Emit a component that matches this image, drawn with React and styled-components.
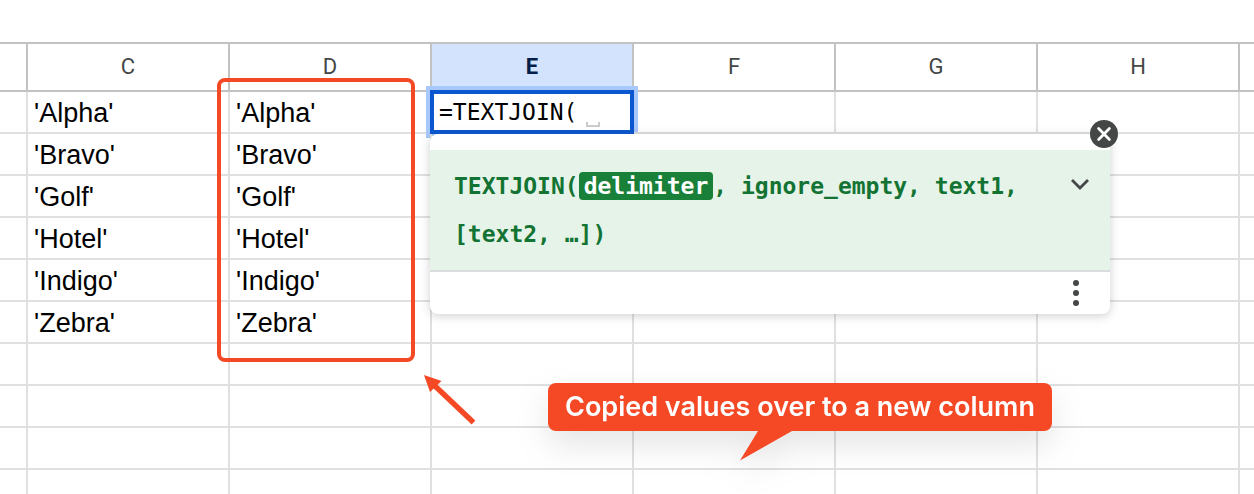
import { useState } from 'react';
import styled, { createGlobalStyle } from 'styled-components';

const GlobalStyle = createGlobalStyle`
  :root {
    --color-ink: #444746;
    --color-grid: #e0e0e0;
    --color-grid-dark: #c0c3c2;
    --color-note: #f54825;
    --color-blue: #0b57d0;
    --color-green: #137333;
    --font-cell: 'Liberation Sans', Arial, sans-serif;
    --font-code: 'DejaVu Sans Mono', monospace;
  }

  * {
    box-sizing: border-box;
  }

  body {
    margin: 0;
    background-color: #fff;
    font-family: var(--font-cell);
  }
`;

const Page = styled.main`
  position: relative;
  height: 100vh;
  padding-top: 42px;
  overflow: hidden;
`;

const Sheet = styled.table`
  width: 100%;
  table-layout: fixed;
  border-collapse: separate;
  border-spacing: 0;

  tr > :last-child {
    border-right: none;
  }
`;

const Col = styled.col`
  width: ${props => props.$width};
`;

const HeadCell = styled.th`
  height: 50px;
  padding: 0;
  border: 2px solid var(--color-grid-dark);
  border-left: none;
  background-color: ${props => (props.$active ? '#d3e3fd' : '#fff')};
  color: ${props => (props.$active ? '#041e49' : 'var(--color-ink)')};
  font-family: Roboto, sans-serif;
  font-size: 22px;
  font-weight: ${props => (props.$active ? 700 : 400)};
  line-height: 46px;
`;

const Cell = styled.td`
  position: relative;
  height: 42px;
  padding: 2px 6px 0;
  border-right: 2px solid var(--color-grid);
  border-bottom: 2px solid var(--color-grid);
  color: #000;
  font-size: 27px;
  line-height: 38px;
  white-space: nowrap;
`;

const Editor = styled.div`
  position: absolute;
  inset: -2px;
  display: flex;
  align-items: center;
  padding-left: 5px;
  border: 4px solid var(--color-blue);
  background-color: #fff;
  box-shadow: 0 0 0 4px #a8c7fa;
`;

const Formula = styled.input`
  width: 144px;
  height: 36px;
  padding: 0;
  border: none;
  outline: none;
  background: none;
  color: #000;
  font-family: var(--font-code);
  font-size: 23px;
`;

const SpaceMark = styled.span`
  width: 14px;
  height: 5px;
  margin-top: 24px;
  margin-left: 3px;
  border: 2px solid #ccc;
  border-top: none;
`;

const Hint = styled.section`
  position: absolute;
  top: 42px;
  left: -2px;
  z-index: 1;
  width: 680px;
  padding-top: 16px;
  border-radius: 8px;
  background-color: #fff;
  box-shadow: 0 2px 10px rgba(60, 64, 67, 0.25);
`;

const HintBody = styled.div`
  display: flex;
  align-items: flex-start;
  padding: 12px 14px 12px 24px;
  border-bottom: 2px solid #dadce0;
  background-color: #e6f3e9;
`;

const Signature = styled.code`
  flex: 1;
  color: var(--color-green);
  font-family: var(--font-code);
  font-size: 23px;
  font-weight: 700;
  line-height: 48px;
  white-space: normal;
`;

const Param = styled.span`
  ${props =>
    props.$active &&
    `
    padding: 1px 5px;
    border-radius: 4px;
    background-color: #188038;
    color: #fff;
  `}
`;

const HintFooter = styled.footer`
  display: flex;
  justify-content: flex-end;
  padding: 0 18px;
`;

const IconButton = styled.button`
  display: flex;
  align-items: center;
  justify-content: center;
  width: 32px;
  height: ${props => props.$height || '42px'};
  padding: 0;
  border: none;
  background: none;
  color: var(--color-ink);
  cursor: pointer;
`;

const CloseButton = styled(IconButton)`
  position: absolute;
  top: -14px;
  right: -8px;
  width: 28px;
  height: 28px;
  border-radius: 50%;
  background-color: var(--color-ink);
  color: #fff;
`;

const Outline = styled.div`
  position: absolute;
  top: 78px;
  left: 217px;
  width: 198px;
  height: 284px;
  border: 4px solid var(--color-note);
  border-radius: 8px;
  pointer-events: none;
`;

const Arrow = styled.svg`
  position: absolute;
  top: 374px;
  left: 422px;
  color: var(--color-note);
`;

const Callout = styled.aside`
  position: absolute;
  top: 383px;
  left: 548px;
  filter: drop-shadow(0 14px 16px rgba(0, 0, 0, 0.1));
`;

const CalloutText = styled.p`
  margin: 0;
  padding: 0 17px;
  border-radius: 8px;
  background-color: var(--color-note);
  color: #fff;
  font-family: Inter, sans-serif;
  font-size: 27px;
  font-weight: 600;
  line-height: 48px;
  white-space: nowrap;
`;

const CalloutTail = styled.svg`
  display: block;
  margin-left: 192px;
  color: var(--color-note);
`;

const columns = ['C', 'D', 'E', 'F', 'G', 'H'];
const values = ['Alpha', 'Bravo', 'Golf', 'Hotel', 'Indigo', 'Zebra'];
const rows = Array.from({ length: 10 }, (_, i) => values[i]);

const FormulaHint = () => (
  <Hint aria-label='Formula help'>
    <HintBody>
      <Signature>
        <span>TEXTJOIN(</span>
        <Param $active>delimiter</Param>
        <span>, </span>
        <Param>ignore_empty, </Param>
        <Param>text1, </Param>
        <Param>[text2, …])</Param>
      </Signature>
      <IconButton $height='44px' aria-label='Expand'>
        <svg width='20' height='14' viewBox='0 0 20 14' fill='none'>
          <path d='M2 3l8 8 8-8' stroke='currentColor' strokeWidth='2.8' />
        </svg>
      </IconButton>
    </HintBody>
    <HintFooter>
      <IconButton aria-label='More options'>
        <svg width='6' height='28' viewBox='0 0 6 28' fill='currentColor'>
          <circle cx='3' cy='4' r='3' />
          <circle cx='3' cy='14' r='3' />
          <circle cx='3' cy='24' r='3' />
        </svg>
      </IconButton>
    </HintFooter>
    <CloseButton aria-label='Close'>
      <svg width='16' height='16' viewBox='0 0 16 16'>
        <path
          d='M2.6 2.6l10.8 10.8M13.4 2.6L2.6 13.4'
          stroke='currentColor'
          strokeWidth='2.8'
          strokeLinecap='round'
        />
      </svg>
    </CloseButton>
  </Hint>
);

const FormulaCell = () => {
  const [formula, setFormula] = useState('=TEXTJOIN(');

  return (
    <Cell>
      <Editor>
        <Formula
          aria-label='E1'
          value={formula}
          spellCheck={false}
          onChange={e => setFormula(e.target.value)}
        />
        <SpaceMark />
      </Editor>
      <FormulaHint />
    </Cell>
  );
};

const App = () => (
  <>
    <GlobalStyle />
    <Page>
      <Sheet>
        <colgroup>
          <Col $width='28px' />
          {columns.map(name => (
            <Col key={name} $width='202px' />
          ))}
          <Col $width='auto' />
        </colgroup>
        <thead>
          <tr>
            <HeadCell />
            {columns.map(name => (
              <HeadCell key={name} scope='col' $active={name === 'E'}>
                {name}
              </HeadCell>
            ))}
            <HeadCell />
          </tr>
        </thead>
        <tbody>
          {rows.map((value, i) => (
            <tr key={i}>
              <Cell />
              <Cell>{value && `'${value}'`}</Cell>
              <Cell>{value && `'${value}'`}</Cell>
              {i === 0 ? <FormulaCell /> : <Cell />}
              <Cell />
              <Cell />
              <Cell />
              <Cell />
            </tr>
          ))}
        </tbody>
      </Sheet>

      <Outline />
      <Arrow width='56' height='52' viewBox='0 0 56 52' aria-hidden='true'>
        <path d='M13 12L51.5 48.5' stroke='currentColor' strokeWidth='5.4' />
        <path d='M2 1l17.500 6L8 18z' fill='currentColor' />
      </Arrow>
      <Callout>
        <CalloutText>Copied values over to a new column</CalloutText>
        <CalloutTail width='52' height='30' viewBox='0 0 52 30'>
          <path d='M18 0h34L0 29.500z' fill='currentColor' />
        </CalloutTail>
      </Callout>
    </Page>
  </>
);

export default App;
